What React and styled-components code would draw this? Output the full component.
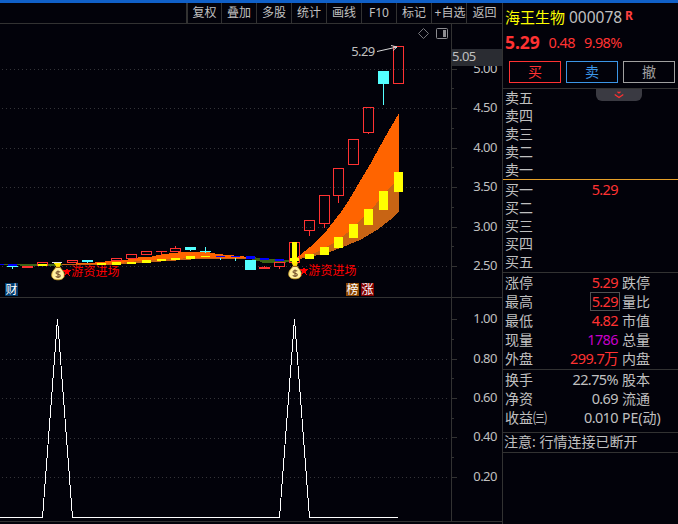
import React from 'react';
import styled, { createGlobalStyle } from 'styled-components';

const LINE = '#323232';
const RED = '#ff3232';
const CYAN = '#54ffff';
const GREY = '#c0c0c0';

const tools = ['复权', '叠加', '多股', '统计', '画线', 'F10', '标记', '+自选', '返回'];

// x, top, bottom, high, low
const redCandles = [
  [22, 266, 268], [37, 262, 266], [67, 260, 263], [111, 258, 261], [126, 254, 259],
  [141, 251, 255], [156, 251, 252, 251, 255], [170, 248, 252, 246, 252], [259, 267, 269, 266, 269],
  [274, 262, 267, 262, 269], [289, 242, 263], [304, 220, 231, 220, 236], [319, 195, 224, 195, 228],
  [333, 168, 196, 168, 203], [348, 139, 165], [363, 107, 133, 107, 134], [393, 46, 84],
];

const cyanCandles = [
  [7, 266, 267, 266, 269], [82, 260, 262, 260, 263], [185, 247, 250, 247, 251],
  [200, 251, 252, 247, 253], [245, 260, 270], [378, 71, 84, 71, 105],
];

// x, top, bottom
const yellowBars = [
  [38, 264, 266], [97, 263, 265], [112, 262, 265], [127, 262, 264], [142, 260, 263],
  [157, 259, 261], [171, 258, 260], [186, 256, 259], [201, 256, 257], [290, 258, 261],
  [305, 254, 259], [320, 247, 255], [334, 237, 248], [349, 224, 238], [364, 209, 225],
  [379, 191, 210], [394, 172, 192],
];

const blueBars = [
  [-5, 264, 265], [8, 264, 266], [216, 256, 257], [231, 256, 257],
  [246, 256, 259], [260, 258, 260], [275, 259, 261],
];

const asks = ['卖五', '卖四', '卖三', '卖二', '卖一'];
const bids = [['买一', '5.29'], ['买二'], ['买三'], ['买四'], ['买五']];

const stats = [
  ['涨停', '5.29', '跌停', RED],
  ['最高', '5.29', '量比', RED, true],
  ['最低', '4.82', '市值', RED],
  ['现量', '1786', '总量', '#c800c8'],
  ['外盘', '299.7万', '内盘', RED],
];

const finance = [
  ['换手', '22.75%', '股本'],
  ['净资', '0.69', '流通'],
  ['收益㈢', '0.010', 'PE(动)'],
];

function Grid({ rows }) {
  return rows.map(y => (
    <line key={y} x1="2" x2="448" y1={y + 0.5} y2={y + 0.5} stroke="#343438" strokeDasharray="1 3" />
  ));
}

function MoneyBag({ x, y }) {
  return (
    <g transform={`translate(${x} ${y})`} shapeRendering="auto">
      <path d="M3.5 -0.5 L10 -0.5 L8.8 3 L5.2 3 Z" fill="#ffe600" />
      <path d="M5 3 H9 C10 5.5 13.3 7 13.3 11 C13.3 14.5 10.5 15.8 7 15.8 C3.5 15.8 0.7 14.5 0.7 11 C0.7 7 4 5.5 5 3 Z" fill="#fff0a0" stroke="#d8a828" strokeWidth="0.8" />
      <path d="M4.6 3.5 H9.4" stroke="#a06818" />
      <path d="M9.3 8.2 C8 7.1 5 7.3 5 9 C5 10.7 9.3 9.9 9.3 11.7 C9.3 13.5 6 13.5 4.7 12.3 M7 6.5 V14.1" fill="none" stroke="#75502c" strokeWidth="1.1" />
    </g>
  );
}

function Signal({ x, y }) {
  return (
    <g>
      <path
        transform={`translate(${x} ${y})`}
        d="M4 0 L5 3.3 H8 L5.7 5.3 L6.7 9 L4 6.8 L1.3 9 L2.3 5.3 L0 3.3 H3 Z"
        fill="#ff0000"
      />
      <ChartText x={x + 8.3} y={y + 9.2} fill="#ff0000">游资进场</ChartText>
    </g>
  );
}

function PriceChart() {
  return (
    <Drawing width="451" height="273" viewBox="0 24 451 273" shapeRendering="crispEdges">
      <Grid rows={[69, 108, 148, 187, 227, 266]} />
      <path d="M0 264 H62 V266 H20 V265 H0 Z" fill="#3c6414" />
      <path d="M250 257 L262 258 L275 259 L292 260 V262 L280 263 H262 V262 L250 259 Z" fill="#3c6414" />
      <path d="M62 264 L90 263 L110 261 L125 260 L140 257 H150 L158 255 L172 253 L183 252 H208 L217 254 L228 255 L240 256 L250 258 V259 H198 L183 260 L168 261 L153 262 L139 263 L130 264 L110 265 H62 Z" fill="#c86414" />
      <path d="M62 264 L90 263 L110 261 L125 260 L140 257 H150 L158 255 L172 253 L183 252 H208 L217 254 L228 255 L240 256 L248 257 V258 H198 L168 259 L139 261 L110 264 H62 Z" fill="#ff6400" />
      <path d="M294 260 L300 255 L310 247 L319 238.5 L327 230 L334 221 L341 212 L348 201.5 L356 188 L370 164.5 L384 139 L399 113 V212 L390 220 L377 230 L360 240 L343 247 L327 253 L310 257 Z" fill="#c86414" />
      <path d="M294 260 L300 255 L310 247 L319 238.5 L327 230 L334 221 L341 212 L348 201.5 L356 188 L370 164.5 L384 139 L399 113 V178 L390 187 L376 204 L362 219 L347 233 L332 244 L317 252 Z" fill="#ff6400" />
      {redCandles.map(([x, top, bottom, high = top, low = bottom]) => (
        <g key={x} fill="none" stroke={RED}>
          <rect x={x + 0.5} y={top + 0.5} width="10" height={Math.max(bottom - top - 1, 0.01)} />
          {high < top && <path d={`M${x + 5.5} ${high} V${top}`} />}
          {low > bottom && <path d={`M${x + 5.5} ${bottom} V${low}`} />}
        </g>
      ))}
      {cyanCandles.map(([x, top, bottom, high = top, low = bottom]) => (
        <g key={x} fill={CYAN}>
          <rect x={x} y={top} width="11" height={bottom - top} />
          <rect x={x + 5} y={high} width="1" height={low - high} />
        </g>
      ))}
      <path d="M220.5 258 V260 M235.5 258 V261" stroke={CYAN} />
      {yellowBars.map(([x, top, bottom]) => (
        <rect key={x} x={x} y={top} width="9" height={bottom - top} fill="#ffff00" />
      ))}
      {blueBars.map(([x, top, bottom]) => (
        <rect key={x} x={x} y={top} width="9" height={bottom - top} fill="#0000ff" />
      ))}
      <rect x="292" y="242" width="5" height="21" fill="#ffff00" />
      <path d="M52 262.5 H62" stroke="#e0e0e0" />
      <path d="M54 263.5 H61" stroke="#ffff00" />
      <MoneyBag x={51} y={264} />
      <Signal x={63} y={267} />
      <MoneyBag x={288} y={263} />
      <Signal x={300} y={266} />
      <ChartText $num x="351.2" y="56" fill={GREY}>5.29</ChartText>
      <path d="M377 51.5 L397 47 M391 45.5 L397 47 L393 50.5" fill="none" stroke="#d8d8d8" shapeRendering="auto" />
      <path d="M423.5 28.5 L428.5 33.5 L423.5 38.5 L418.5 33.5 Z" fill="none" stroke="#77777c" shapeRendering="auto" />
      <rect x="436.5" y="28.5" width="11" height="10" rx="1" fill="none" stroke="#8c8c90" shapeRendering="auto" />
      <rect x="443" y="30" width="3" height="7" fill="#8c8c90" />
      <Tag x={5} text="财" fill="#003c6e" />
      <Tag x={346} text="榜" fill="#8a4600" />
      <Tag x={361} text="涨" fill="#820000" />
    </Drawing>
  );
}

function Tag({ x, text, fill }) {
  return (
    <g>
      <rect x={x} y="283" width="13" height="13" fill={fill} />
      <ChartText x={x + 0.5} y="294" fill="#ffffff">{text}</ChartText>
    </g>
  );
}

function SignalChart() {
  return (
    <Drawing width="451" height="223" viewBox="0 298 451 223" shapeRendering="crispEdges">
      <Grid rows={[359, 398, 438, 477]} />
      <path
        d="M0 517.5 H42.5 L57.5 319 L72.5 517.5 H279.5 L294.5 319 L309.5 517.5 H398"
        fill="none"
        stroke="#ffffff"
      />
    </Drawing>
  );
}

function Axis({ labels, top }) {
  return (
    <AxisColumn $top={top}>
      {labels.map((label, i) => (
        <React.Fragment key={label}>
          {i > 0 && <AxisRow><Tick $minor /></AxisRow>}
          <AxisRow><Tick /><AxisLabel>{label}</AxisLabel></AxisRow>
        </React.Fragment>
      ))}
    </AxisColumn>
  );
}

function App() {
  return (
    <Screen>
      <GlobalStyle />
      <TopStrip />
      <Body>
        <Left>
          <Toolbar>
            {tools.map(name => <Tool key={name} $clipped={name.length > 2 && name !== 'F10'}>{name}</Tool>)}
          </Toolbar>
          <Pane $height={274}>
            <PriceChart />
            <Axis labels={['5.00', '4.50', '4.00', '3.50', '3.00', '2.50']} top={35.4} />
            <LastPrice>5.05</LastPrice>
          </Pane>
          <Pane $height={224}>
            <SignalChart />
            <Axis labels={['1.00', '0.80', '0.60', '0.40', '0.20']} top={11.8} />
          </Pane>
        </Left>
        <Quote>
          <Header>
            <Title>
              <Name>海王生物</Name>
              <Code>000078</Code>
              <Flag>R</Flag>
            </Title>
            <Prices>
              <Price>5.29</Price>
              <span>0.48</span>
              <span>9.98%</span>
            </Prices>
            <Buttons>
              <Button $color={RED}>买</Button>
              <Button $color="#3c96e6">卖</Button>
              <Button $color="#a0a0a0">撤</Button>
            </Buttons>
          </Header>
          <Asks>
            {asks.map(label => <Row key={label} $height={18}><span>{label}</span></Row>)}
            <Handle>
              <svg width="10" height="8" viewBox="0 0 10 8" fill="none" stroke={RED}>
                <path d="M3.5 0.8 L5 2 L6.5 0.8 M0.7 3.4 L5 6.6 L9.3 3.4" strokeWidth="1.2" />
              </svg>
            </Handle>
          </Asks>
          <Bids>
            {bids.map(([label, price]) => (
              <Row key={label} $height={18}>
                <span>{label}</span>
                <Value $color={RED}>{price}</Value>
              </Row>
            ))}
          </Bids>
          <Stats>
            {stats.map(([label, value, next, color, boxed]) => (
              <Row key={label} $height={19}>
                <span>{label}</span>
                <Value $color={color} $boxed={boxed}>{value}</Value>
                <span>{next}</span>
              </Row>
            ))}
          </Stats>
          <Finance>
            {finance.map(([label, value, next]) => (
              <Row key={label} $height={19}>
                <span>{label}</span>
                <Value>{value}</Value>
                <span>{next}</span>
              </Row>
            ))}
          </Finance>
          <Notice>注意: 行情连接已断开</Notice>
        </Quote>
      </Body>
    </Screen>
  );
}

export default App;

const GlobalStyle = createGlobalStyle`
  * {
    box-sizing: border-box;
  }
  body {
    margin: 0;
    background: #02020a;
  }
`

const Screen = styled.div`
  display: flex;
  flex-direction: column;
  width: 678px;
  height: 524px;
  overflow: hidden;
  background: #02020a;
  color: ${GREY};
  font-family: "Noto Sans", "Noto Sans CJK SC", sans-serif;
  font-size: 14px;
  white-space: nowrap;
`

const TopStrip = styled.div`
  height: 3px;
  background: #1060c8;
`

const Body = styled.div`
  display: flex;
  flex: 1;
`

const Left = styled.div`
  width: 502px;
`

const Toolbar = styled.div`
  display: flex;
  justify-content: flex-end;
  height: 21px;
  border-bottom: 1px solid ${LINE};
`

const Tool = styled.div`
  width: 35px;
  height: 20px;
  padding-left: ${props => props.$clipped ? 2 : 0}px;
  border-left: 1px solid ${LINE};
  overflow: hidden;
  font-size: 12px;
  line-height: 19px;
  text-align: center;

  &:first-child {
    border-left-width: 2px;
  }
  &:last-child {
    width: 36px;
  }
`

const Pane = styled.div`
  position: relative;
  display: flex;
  height: ${props => props.$height}px;
  border-bottom: 1px solid ${LINE};
`

const Drawing = styled.svg`
  display: block;
  flex: none;
`

const ChartText = styled.text`
  font-family: "Noto Sans", "Noto Sans CJK SC", sans-serif;
  font-size: ${props => props.$num ? '13px' : '12px'};
  letter-spacing: ${props => props.$num ? '-0.6px' : '0.1px'};
`

const AxisColumn = styled.div`
  width: 51px;
  padding-top: ${props => props.$top}px;
  border-left: 1px solid ${LINE};
`

const AxisRow = styled.div`
  display: flex;
  align-items: center;
  justify-content: space-between;
  height: 19.72px;
  padding-right: 5px;
`

const AxisLabel = styled.span`
  height: 19px;
  font-size: 13px;
  line-height: 17px;
  letter-spacing: -0.5px;
`

const Tick = styled.span`
  width: ${props => props.$minor ? 2 : 5}px;
  height: 1px;
  background: ${LINE};
`

const LastPrice = styled.div`
  position: absolute;
  top: 25px;
  left: 452px;
  width: 50px;
  height: 17px;
  background: #2a2c32;
  font-size: 13px;
  line-height: 15px;
  letter-spacing: -0.5px;
`

const Quote = styled.div`
  width: 176px;
  border-left: 1px solid ${LINE};
`

const Header = styled.div`
  height: 86px;
  padding: 5px 0 0 2px;
  border-bottom: 1px solid ${LINE};
`

const Title = styled.div`
  display: flex;
  height: 20px;
  line-height: 19px;
`

const Name = styled.span`
  width: 64px;
  color: #ffff00;
  font-size: 15px;
`

const Code = styled.span`
  width: 56px;
  font-size: 15.5px;
`

const Flag = styled.span`
  color: #ff4040;
  font-size: 12px;
  font-weight: bold;
  line-height: 16px;
`

const Prices = styled.div`
  display: flex;
  gap: 9px;
  height: 30px;
  color: ${RED};
  font-size: 14.5px;
  line-height: 28px;
  letter-spacing: -0.6px;
`

const Price = styled.span`
  font-size: 17.5px;
  font-weight: bold;
  letter-spacing: -0.1px;
`

const Buttons = styled.div`
  display: flex;
  gap: 5px;
  padding: 3px 0 0 4px;
`

const Button = styled.button`
  width: 52px;
  height: 22px;
  padding: 0;
  border: 1px solid ${props => props.$color};
  background: transparent;
  color: ${props => props.$color};
  font-family: inherit;
  font-size: 14px;
  line-height: 18px;
`

const Asks = styled.div`
  position: relative;
  height: 91px;
  border-bottom: 1px solid #e6a028;
`

const Bids = styled.div`
  height: 93px;
  border-bottom: 1px solid ${LINE};
`

const Stats = styled.div`
  height: 97px;
  border-bottom: 1px solid ${LINE};
`

const Finance = styled.div`
  height: 63px;
  border-bottom: 1px solid ${LINE};
`

const Row = styled.div`
  display: grid;
  grid-template-columns: 45px 70px 1fr;
  column-gap: 1px;
  align-items: center;
  height: ${props => props.$height}px;
  padding-left: 2px;
  line-height: ${props => props.$height}px;
`

const Value = styled.span`
  justify-self: end;
  height: 19px;
  margin-right: 1px;
  padding: 0 1px;
  color: ${props => props.$color || GREY};
  font-size: 14.5px;
  letter-spacing: -0.6px;
  line-height: 17px;
  border: 1px solid ${props => props.$boxed ? '#505050' : 'transparent'};
`

const Handle = styled.div`
  position: absolute;
  top: 0;
  left: 93px;
  display: flex;
  align-items: center;
  justify-content: center;
  width: 46px;
  height: 12px;
  padding-bottom: 1px;
  border-radius: 0 0 6px 6px;
  background: #3a3a42;
`

const Notice = styled.div`
  height: 20px;
  padding-left: 1px;
  border-bottom: 1px solid ${LINE};
  line-height: 18px;
`
